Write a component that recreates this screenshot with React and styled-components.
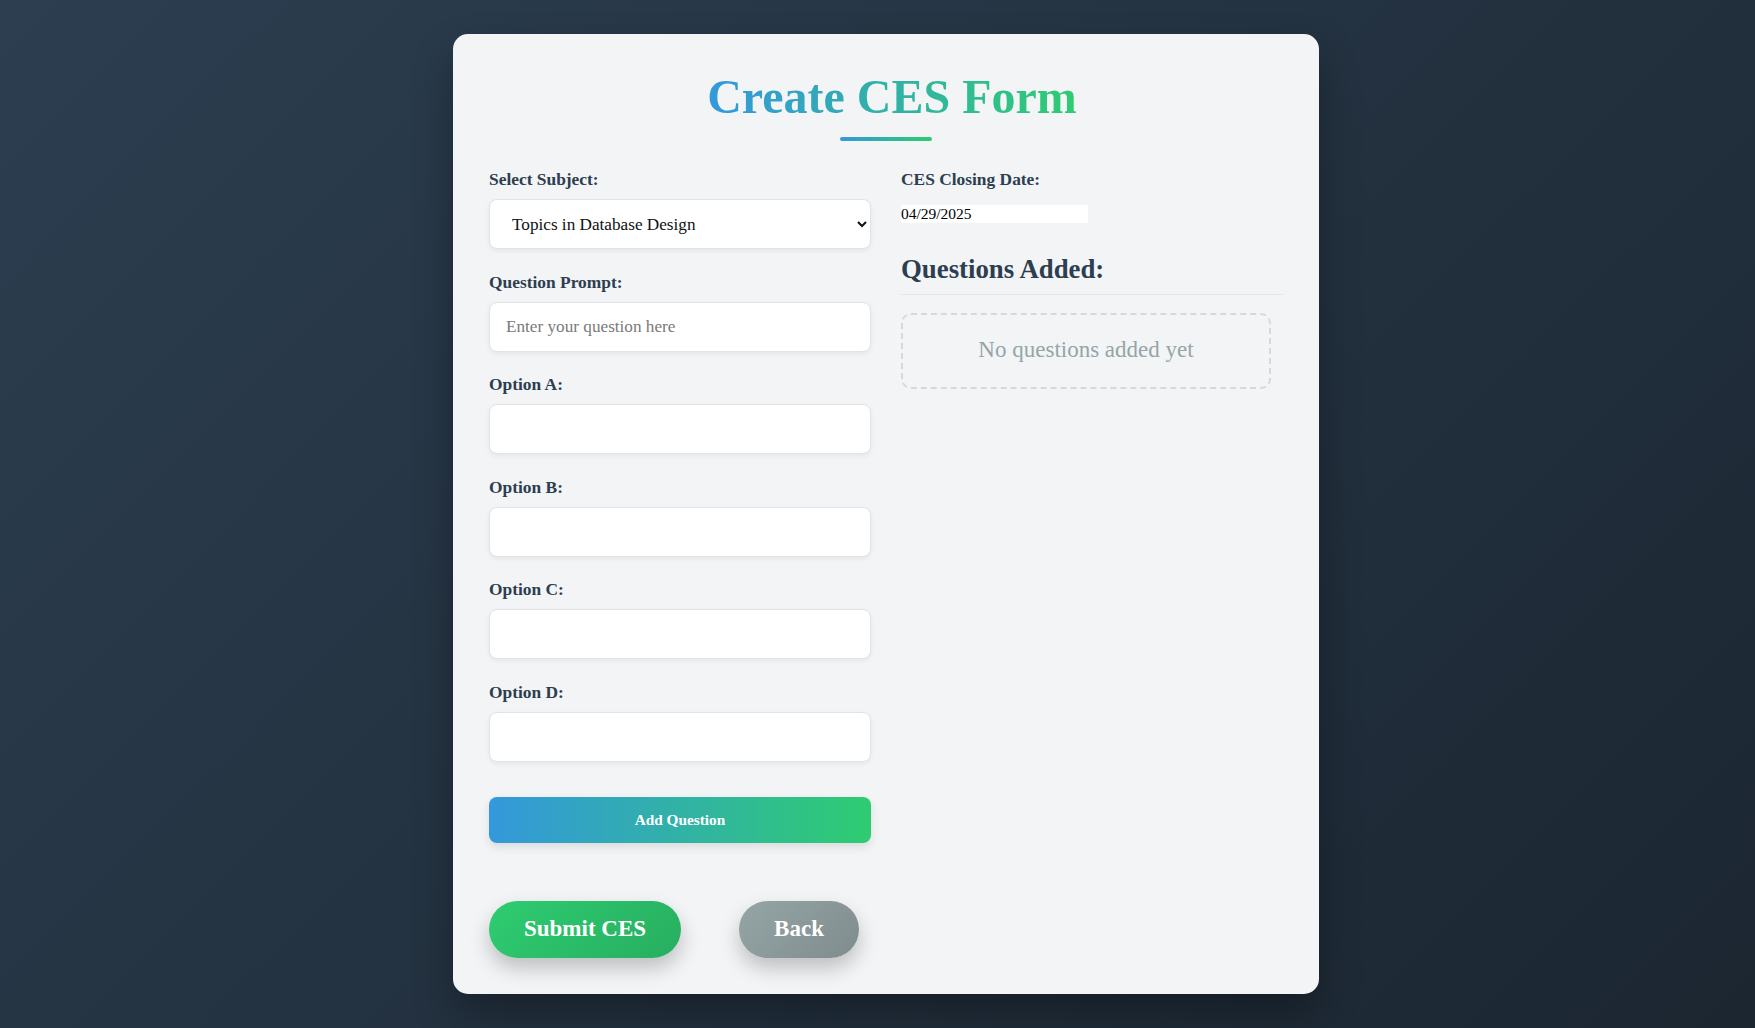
import React from "react";
import styled, { createGlobalStyle } from "styled-components";

const Global = createGlobalStyle`
  html, body { margin: 0; padding: 0; }
  body {
    font-family: "Liberation Serif", "Times New Roman", serif;
    background: linear-gradient(135deg, #2c3e50 0%, #1b2631 100%);
    min-height: 100vh;
  }
  * { box-sizing: border-box; }
`;

const Page = styled.div`
  min-height: 100vh;
  display: flex;
  align-items: center;
  justify-content: center;
  padding-left: 17px;
`;

const Card = styled.div`
  width: 866px;
  background: #f3f4f6;
  border-radius: 15px;
  padding: 35px 36px 36px;
  box-shadow: 0 20px 40px rgba(0, 0, 0, 0.3);
`;

const Header = styled.div`
  display: flex;
  flex-direction: column;
  align-items: center;
`;

const Title = styled.h1`
  margin: 0 0 0 12px;
  display: inline-block;
  font-size: 48px;
  line-height: 55px;
  font-weight: bold;
  background: linear-gradient(90deg, #3498db, #2ecc71);
  -webkit-background-clip: text;
  background-clip: text;
  color: transparent;
`;

const Underline = styled.div`
  width: 92px;
  height: 4px;
  margin-top: 13px;
  border-radius: 2px;
  background: linear-gradient(90deg, #3498db, #2ecc71);
`;

const Grid = styled.div`
  display: grid;
  grid-template-columns: 1fr 1fr;
  column-gap: 30px;
  margin-top: 28px;
  align-items: start;
`;

const Column = styled.div`
  display: flex;
  flex-direction: column;
`;

const Group = styled.div`
  display: flex;
  flex-direction: column;
  margin-bottom: 22.5px;
`;

const Label = styled.label`
  font-size: 17.4px;
  line-height: 20px;
  font-weight: bold;
  color: #2c3e50;
  margin-bottom: 10px;
`;

const fieldBase = `
  width: 100%;
  height: 50px;
  border: 1px solid #e0e3e7;
  border-radius: 8px;
  background: #ffffff;
  box-shadow: 0 2px 5px rgba(0, 0, 0, 0.06);
  font-family: "Liberation Serif", "Times New Roman", serif;
  font-size: 17.2px;
  color: #111;
  outline: none;
`;

const Select = styled.select`
  ${fieldBase}
  padding: 0 12px 0 18px;
`;

const Input = styled.input`
  ${fieldBase}
  padding: 0 16px;
  &::placeholder { color: #7a7a7a; }
`;

const DateInput = styled.input`
  width: 187px;
  height: 18px;
  margin-top: 6px;
  padding: 0;
  border: none;
  background: #ffffff;
  font-family: "Liberation Serif", "Times New Roman", serif;
  font-size: 15.5px;
  color: #000;
  outline: none;
`;

const AddButton = styled.button`
  margin-top: 12.5px;
  width: 100%;
  height: 46px;
  border: none;
  border-radius: 8px;
  background: linear-gradient(90deg, #3498db, #2ecc71);
  color: #fff;
  font-family: "Liberation Serif", "Times New Roman", serif;
  font-weight: bold;
  font-size: 15.3px;
  box-shadow: 0 4px 10px rgba(0, 0, 0, 0.1);
  cursor: pointer;
`;

const SectionTitle = styled.h3`
  margin: 31px 0 0;
  font-size: 26.8px;
  line-height: 30px;
  font-weight: bold;
  color: #2c3e50;
  padding-bottom: 10px;
  border-bottom: 1px solid #e4e7eb;
`;

const EmptyBox = styled.div`
  margin: 18px 12px 0 0;
  padding: 22px 10px 23px;
  border: 2px dashed #d5d9dd;
  border-radius: 10px;
  text-align: center;
  color: #95a5a6;
  font-size: 23px;
  line-height: 26.5px;
`;

const Actions = styled.div`
  display: flex;
  gap: 58px;
  margin-top: 58px;
`;

const PillButton = styled.button`
  height: 57px;
  padding: 0 35px;
  border: none;
  border-radius: 29px;
  color: #fff;
  font-family: "Liberation Serif", "Times New Roman", serif;
  font-weight: bold;
  font-size: 23px;
  cursor: pointer;
  box-shadow: 0 10px 20px rgba(0, 0, 0, 0.22);
  background: ${(p) =>
    p.$variant === "gray"
      ? "linear-gradient(135deg, #95a5a6, #7f8c8d)"
      : "linear-gradient(135deg, #2ecc71, #27ae60)"};
`;

const fields = [
  { label: "Question Prompt:", placeholder: "Enter your question here" },
  { label: "Option A:" },
  { label: "Option B:" },
  { label: "Option C:" },
  { label: "Option D:" },
];

export default function App() {
  return (
    <>
      <Global />
      <Page>
        <Card>
          <Header>
            <Title>Create CES Form</Title>
            <Underline />
          </Header>
          <Grid>
            <Column>
              <Group>
                <Label>Select Subject:</Label>
                <Select defaultValue="tdd">
                  <option value="tdd">Topics in Database Design</option>
                </Select>
              </Group>
              {fields.map((f) => (
                <Group key={f.label}>
                  <Label>{f.label}</Label>
                  <Input type="text" placeholder={f.placeholder || ""} />
                </Group>
              ))}
              <AddButton>Add Question</AddButton>
            </Column>
            <Column>
              <Label>CES Closing Date:</Label>
              <DateInput type="text" defaultValue="04/29/2025" />
              <SectionTitle>Questions Added:</SectionTitle>
              <EmptyBox>No questions added yet</EmptyBox>
            </Column>
          </Grid>
          <Actions>
            <PillButton>Submit CES</PillButton>
            <PillButton $variant="gray">Back</PillButton>
          </Actions>
        </Card>
      </Page>
    </>
  );
}
